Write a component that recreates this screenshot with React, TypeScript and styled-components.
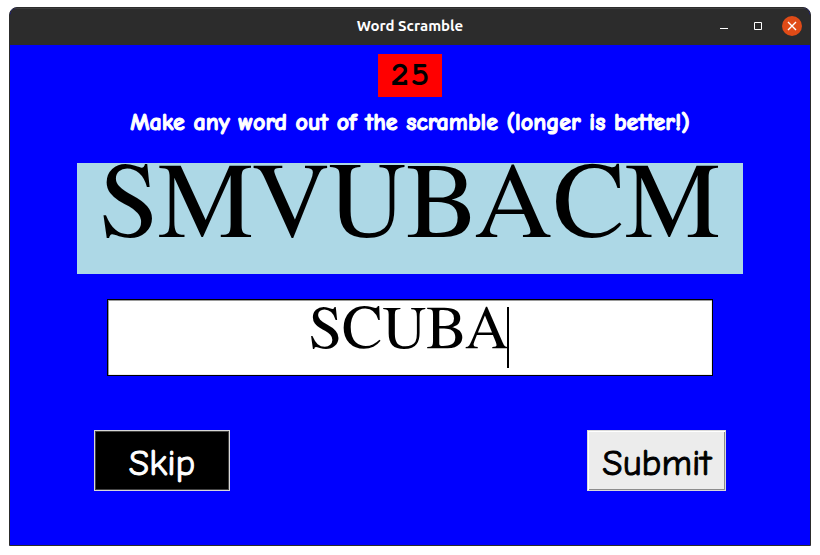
import React, { useLayoutEffect, useRef, useState } from "react";
import styled, { createGlobalStyle } from "styled-components";

const casual = `"Comic Sans MS", "Comic Neue", Lato, sans-serif`;
const serif = `"Nimbus Roman", FreeSerif, "Liberation Serif", "Times New Roman", serif`;

const GlobalStyle = createGlobalStyle`
  * { box-sizing: border-box; }
  body { margin: 0; background: #fff; }
`;

const Page = styled.div`
  padding: 7px 9px 9px;
`;

const Window = styled.main`
  border: 1px solid #2c2c2c;
  border-radius: 8px 8px 0 0;
  overflow: hidden;
  background: #0000ff;
`;

const TitleBar = styled.header`
  display: grid;
  grid-template-columns: 1fr auto 1fr;
  align-items: center;
  height: 37px;
  padding: 0 8px 2px;
  background: #2c2c2c;
  box-shadow: inset 0 1px #3d3d3d;
`;

const Title = styled.h1`
  grid-column: 2;
  margin: 0;
  color: #fff;
  font: 700 15px/20px Ubuntu, "Noto Sans", sans-serif;
`;

const WindowControls = styled.div`
  display: flex;
  justify-content: flex-end;
  gap: 14px;
`;

const ControlButton = styled.button<{ $close?: boolean }>`
  width: 20px;
  height: 20px;
  padding: 0;
  border: 0;
  border-radius: 50%;
  background: ${(p) => (p.$close ? "#e04b17" : "transparent")};
  color: #fff;

  svg { display: block; }
`;

const Game = styled.section`
  display: flex;
  flex-direction: column;
  align-items: center;
  padding: 9px 84px 54px;
`;

const Timer = styled.output`
  padding: 0 12px;
  background: #ff0000;
  color: #000;
  font: 700 33px/43px FreeMono, "Liberation Mono", "Courier New", monospace;
`;

const Instructions = styled.p`
  margin: 9px 0 25px;
  color: #fff;
  font: 700 24px/32px ${casual};
  -webkit-text-stroke: 1px currentColor;
  white-space: nowrap;
`;

const Scramble = styled.div`
  padding: 0 23px 27px;
  background: #add8e6;
  color: #000;
  font: 400 108px/84px ${serif};
  font-kerning: none;
  white-space: nowrap;
`;

const Entry = styled.div`
  position: relative;
  width: 96%;
  margin: 25px 0 54px;
  font: 400 61px/58px ${serif};
`;

const WordInput = styled.input`
  display: block;
  width: 100%;
  height: 77px;
  padding: 0 2px 17px 0;
  border: 1px solid #000;
  border-radius: 0;
  outline: 0;
  box-shadow: inset 1px 1px #9a9a9a, inset -1px -1px #ececec;
  background: #fff;
  color: #000;
  caret-color: transparent;
  font: inherit;
  font-kerning: none;
  text-align: center;
`;

const Caret = styled.span`
  position: absolute;
  top: 8px;
  width: 2px;
  height: 61px;
  margin-left: -2px;
  background: #000;
  pointer-events: none;
`;

const Actions = styled.div`
  display: flex;
  justify-content: space-between;
  width: 100%;
`;

const ActionButton = styled.button<{ $dark?: boolean }>`
  min-width: 136px;
  height: 61px;
  padding: 4px 14px 0;
  border: 1px solid #d9d9d9;
  border-radius: 0;
  box-shadow: ${(p) =>
    p.$dark
      ? "inset 0 0 0 1px #444"
      : "inset 1px 1px #fff, inset -1px -1px #8c8c8c"};
  background: ${(p) => (p.$dark ? "#000" : "#ececec")};
  color: ${(p) => (p.$dark ? "#fff" : "#000")};
  font: 400 37px/48px ${casual};
  -webkit-text-stroke: 1px currentColor;
`;

export default function App() {
  const [word, setWord] = useState("SCUBA");
  const [wordWidth, setWordWidth] = useState(200);
  const input = useRef<HTMLInputElement>(null);

  useLayoutEffect(() => {
    const context = document.createElement("canvas").getContext("2d");
    if (!context || !input.current) return;
    const { fontSize, fontFamily } = getComputedStyle(input.current);
    context.font = `${fontSize} ${fontFamily}`;
    context.fontKerning = "none";
    setWordWidth(context.measureText(word).width);
  }, [word]);

  return (
    <>
      <GlobalStyle />
      <Page>
        <Window>
          <TitleBar>
            <Title>Word Scramble</Title>
            <WindowControls>
              <ControlButton aria-label="Minimize">
                <svg width="20" height="20"><path d="M6 12.5h8" stroke="currentColor" /></svg>
              </ControlButton>
              <ControlButton aria-label="Maximize">
                <svg width="20" height="20"><path d="M6.5 6.5h7v7h-7z" fill="none" stroke="currentColor" /></svg>
              </ControlButton>
              <ControlButton $close aria-label="Close">
                <svg width="20" height="20"><path d="m6 6 8 8m0-8-8 8" stroke="currentColor" strokeWidth="1.4" /></svg>
              </ControlButton>
            </WindowControls>
          </TitleBar>
          <Game>
            <Timer>25</Timer>
            <Instructions id="instructions">
              Make any word out of the scramble (longer is better!)
            </Instructions>
            <Scramble>SMVUBACM</Scramble>
            <Entry>
              <WordInput
                ref={input}
                aria-labelledby="instructions"
                value={word}
                onChange={(event) => setWord(event.target.value)}
              />
              <Caret style={{ left: `calc(50% + ${Math.floor(wordWidth / 2)}px)` }} />
            </Entry>
            <Actions>
              <ActionButton type="button" $dark>Skip</ActionButton>
              <ActionButton type="submit">Submit</ActionButton>
            </Actions>
          </Game>
        </Window>
      </Page>
    </>
  );
}
